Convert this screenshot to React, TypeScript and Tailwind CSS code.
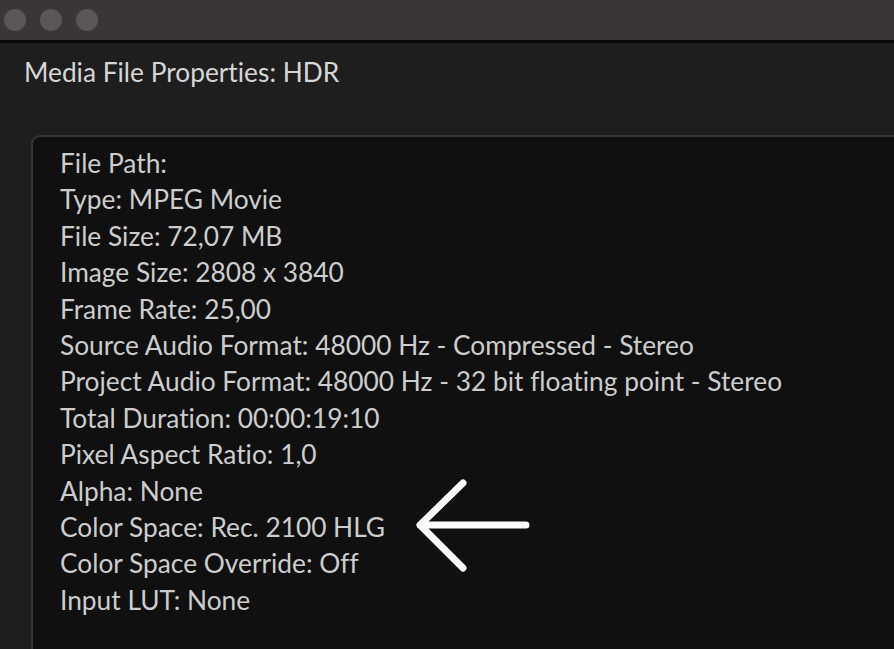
const rows = [
  "File Path:",
  "Type: MPEG Movie",
  "File Size: 72,07 MB",
  "Image Size: 2808 x 3840",
  "Frame Rate: 25,00",
  "Source Audio Format: 48000 Hz - Compressed - Stereo",
  "Project Audio Format: 48000 Hz - 32 bit floating point - Stereo",
  "Total Duration: 00:00:19:10",
  "Pixel Aspect Ratio: 1,0",
  "Alpha: None",
  "Color Space: Rec. 2100 HLG",
  "Color Space Override: Off",
  "Input LUT: None",
];

export default function App() {
  return (
    <div className="w-[894px] h-[649px] overflow-hidden bg-[#1e1e1e] flex flex-col font-['Lato',sans-serif] [font-variant-ligatures:none]">
      {/* window chrome */}
      <div className="h-[40px] shrink-0 bg-[#3a3537] flex items-center gap-[14px] pl-[4px]">
        <span className="size-[22px] rounded-full bg-[#5b5658]" />
        <span className="size-[22px] rounded-full bg-[#5b5658]" />
        <span className="size-[22px] rounded-full bg-[#5b5658]" />
      </div>
      <div className="h-[3px] shrink-0 bg-[#0b0b0b]" />

      <h1 className="pl-[24px] pt-[13px] h-[92px] text-[26.3px] leading-[32px] text-[#d6d6d6]">
        Media File Properties: HDR
      </h1>

      <div className="relative flex-1 ml-[31px] rounded-tl-[9px] border-l-2 border-t-2 border-[#363636] bg-[#101010] pl-[27px] pt-[8px]">
        {rows.map((r) => (
          <div key={r} className="text-[26.3px] leading-[36.4px] text-[#cdcdcd] whitespace-nowrap">
            {r}
          </div>
        ))}

        <svg
          className="absolute left-[381px] top-[342px]"
          width="120"
          height="96"
          viewBox="0 0 120 96"
          fill="none"
          stroke="white"
          strokeWidth="7"
          strokeLinecap="round"
          strokeLinejoin="round"
        >
          <path d="M112 46H6M6 46L49 4M6 46L49 89" />
        </svg>
      </div>
    </div>
  );
}
